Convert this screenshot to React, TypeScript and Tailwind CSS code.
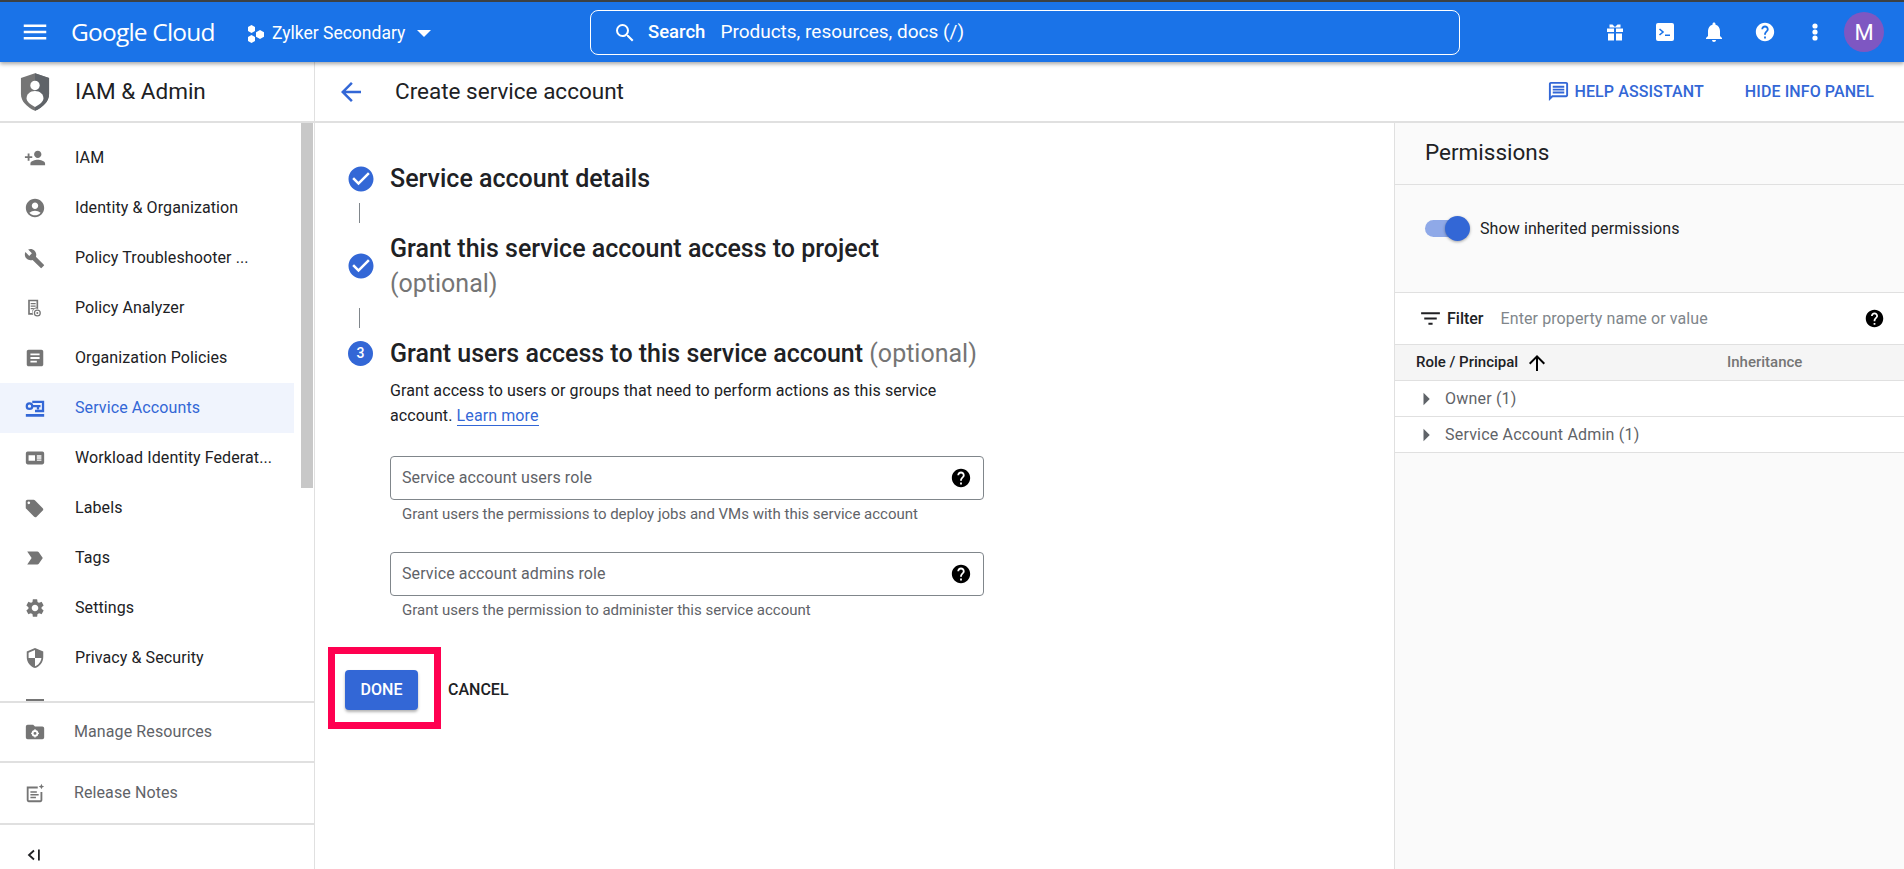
import React from "react";
import {
  MdAccountCircle,
  MdArrowBack,
  MdArrowRight,
  MdArrowUpward,
  MdArticle,
  MdBuild,
  MdCheckCircle,
  MdFilterList,
  MdHelp,
  MdLabelImportant,
  MdLocalOffer,
  MdMenu,
  MdNotifications,
  MdOutlineMessage,
  MdPersonAdd,
  MdSearch,
  MdSecurity,
  MdSettings,
} from "react-icons/md";

function PolicyAnalyzerIcon() {
  return (
    <svg viewBox="0 0 24 24" className="w-[20px] h-[20px] fill-[#757575]">
      <path d="M5 2h12v11.2a4.6 4.6 0 0 0-5.8 6.8H5zm2 2v14h2.600a7 7 0 0 1 5.400-6.800V4zm1 2h6v1.500H8zm0 3h6v1.500H8zm0 3h4v1.500H8z" fillRule="evenodd" />
      <circle cx="16" cy="18" r="3.500" fill="none" stroke="#757575" strokeWidth="1.500" />
      <circle cx="16" cy="18" r="1.200" />
    </svg>
  );
}

function ServiceAccountIcon() {
  return (
    <svg viewBox="0 0 24 24" className="w-[22px] h-[22px] fill-[#3367d6]">
      <path d="M2 18.500h20v3H2zM9 4h13v12.500H12v-2.500h7.500V6.500H9z" />
      <circle cx="6" cy="10" r="3" fill="none" stroke="#3367d6" strokeWidth="2.400" />
      <path d="M9 8.800h9v2.400h-1.500v2.300h-2.500v-2.300H9z" />
    </svg>
  );
}

function WorkloadIcon() {
  return (
    <svg viewBox="0 0 24 24" className="w-[22px] h-[22px] fill-[#757575]">
      <path fillRule="evenodd" d="M4 5h16a2 2 0 0 1 2 2v10a2 2 0 0 1-2 2H4a2 2 0 0 1-2-2V7a2 2 0 0 1 2-2zm1 4v6h7V9zm9 0v1.500h5V9zm0 2.300v1.500h5v-1.500zm0 2.200V15h5v-1.500z" />
    </svg>
  );
}

function ManageResourcesIcon() {
  return (
    <svg viewBox="0 0 24 24" className="w-[22px] h-[22px]">
      <path fill="#757575" d="M4 4h6l2 2h8a2 2 0 0 1 2 2v10a2 2 0 0 1-2 2H4a2 2 0 0 1-2-2V6a2 2 0 0 1 2-2z" />
      <circle cx="12" cy="13.500" r="2.600" fill="none" stroke="#fff" strokeWidth="2" />
      <path stroke="#fff" strokeWidth="1.500" d="M12 9v1.500M12 16.500V18M7.800 13.500h1.500M14.800 13.500h1.500" />
    </svg>
  );
}

function ReleaseNotesIcon() {
  return (
    <svg viewBox="0 0 24 24" className="w-[22px] h-[22px] fill-[#757575]">
      <path fillRule="evenodd" d="M3 5h12v2H5v13h13v-9h2v9a2 2 0 0 1-2 2H5a2 2 0 0 1-2-2z" />
      <path d="M7 10h7v1.600H7zm0 3h9v1.600H7zm0 3h6v1.600H7z" />
      <path d="M19 2l.900 2.100L22 5l-2.100.900L19 8l-.900-2.100L16 5l2.100-.900z" />
    </svg>
  );
}

function ShieldLogo() {
  return (
    <svg viewBox="0 0 32 40" className="w-[30px] h-[38px]">
      <path fill="#757575" d="M16 0l15 5v17c0 8-6.500 14-15 18C7.500 36 1 30 1 22V5z" />
      <path fill="#5f6368" d="M16 0l15 5v17c0 8-6.500 14-15 18z" />
      <circle cx="16" cy="13" r="5" fill="#fff" />
      <path fill="#fff" d="M16 19c5.500 0 9 3.500 9 8 0 3-4 6.500-9 9-5-2.500-9-6-9-9 0-4.500 3.500-8 9-8z" />
    </svg>
  );
}

function ProjectIcon() {
  return (
    <svg viewBox="0 0 18 18" className="w-[18px] h-[18px] fill-white">
      <path d="M4.500 0l3.500 2v4l-3.500 2L1 6V2z" />
      <path d="M4.500 10l3.500 2v4l-3.500 2L1 16v-4z" />
      <path d="M13 5l4 2.300v4.400L13 14l-4-2.300V7.300z" />
    </svg>
  );
}

function GiftIcon() {
  return (
    <svg viewBox="0 0 18 18" className="w-[18px] h-[19px] fill-white">
      <path d="M1 5h7v3.500H1zm9 0h7v3.500h-7zM2 10h6v7H2zm8 0h6v7h-6z" />
      <path d="M3.500 1h3L9 3.500 11.500 1h3v3h-11z" />
    </svg>
  );
}

function TerminalIcon() {
  return (
    <svg viewBox="0 0 18 18" className="w-[18px] h-[18px]">
      <rect width="18" height="18" rx="2" fill="#fff" />
      <path d="M3.500 6l3.500 3-3.500 3" fill="none" stroke="#1a73e8" strokeWidth="1.600" />
      <path d="M9 11.500h5v1.500H9z" fill="#1a73e8" />
    </svg>
  );
}

function DotsIcon() {
  return (
    <svg viewBox="0 0 6 18" className="w-[6px] h-[18px] fill-white">
      <circle cx="3" cy="3" r="2.600" />
      <circle cx="3" cy="9" r="2.600" />
      <circle cx="3" cy="15" r="2.600" />
    </svg>
  );
}

function CollapseIcon() {
  return (
    <svg viewBox="0 0 14 14" className="w-[14px] h-[14px]">
      <path d="M7 2.500L2 7l5 4.500" fill="none" stroke="#202124" strokeWidth="1.800" />
      <path d="M11 1.500h1.800v11H11z" fill="#202124" />
    </svg>
  );
}

const navItems = [
  { label: "IAM", icon: <MdPersonAdd size={22} color="#757575" /> },
  { label: "Identity & Organization", icon: <MdAccountCircle size={22} color="#757575" /> },
  { label: "Policy Troubleshooter ...", icon: <MdBuild size={21} color="#757575" /> },
  { label: "Policy Analyzer", icon: <PolicyAnalyzerIcon /> },
  { label: "Organization Policies", icon: <MdArticle size={22} color="#757575" /> },
  { label: "Service Accounts", icon: <ServiceAccountIcon />, active: true },
  { label: "Workload Identity Federat...", icon: <WorkloadIcon /> },
  { label: "Labels", icon: <MdLocalOffer size={21} color="#757575" /> },
  { label: "Tags", icon: <MdLabelImportant size={22} color="#757575" /> },
  { label: "Settings", icon: <MdSettings size={22} color="#757575" /> },
  { label: "Privacy & Security", icon: <MdSecurity size={22} color="#757575" /> },
];

function Sidebar() {
  return (
    <aside className="w-[315px] shrink-0 border-r border-[#e0e0e0] flex flex-col h-full">
      <div className="h-[580px] shrink-0 relative overflow-hidden pt-[10px] border-b-2 border-[#e0e0e0]">
        <div className="absolute right-[1px] top-0 w-[12px] h-[365px] bg-[#c8c8c8]" />
        {navItems.map((item) => (
          <div
            key={item.label}
            className={`h-[50px] w-[294px] flex items-center ${item.active ? "bg-[#f0f4fd]" : ""}`}
          >
            <div className="w-[75px] pl-[24px] flex items-center shrink-0">{item.icon}</div>
            <span className={`text-[16px] tracking-[0.1px] whitespace-nowrap ${item.active ? "text-[#3367d6]" : "text-[#202124]"}`}>
              {item.label}
            </span>
          </div>
        ))}
        <div className="h-[50px] flex items-center pl-[26px]">
          <div className="w-[18px] h-[18px] bg-[#757575]" />
        </div>
      </div>
      <div className="h-[60px] shrink-0 flex items-center border-b-2 border-[#e0e0e0]">
        <div className="w-[74px] pl-[24px] shrink-0">
          <ManageResourcesIcon />
        </div>
        <span className="text-[16px] tracking-[0.1px] text-[#5f6368]">Manage Resources</span>
      </div>
      <div className="h-[62px] shrink-0 flex items-center border-b-2 border-[#e0e0e0]">
        <div className="w-[74px] pl-[24px] shrink-0">
          <ReleaseNotesIcon />
        </div>
        <span className="text-[16px] tracking-[0.1px] text-[#5f6368]">Release Notes</span>
      </div>
      <div className="flex-1 flex items-end pb-[7px] pl-[27px]">
        <CollapseIcon />
      </div>
    </aside>
  );
}

function RoleField({ placeholder, hint }: { placeholder: string; hint: string }) {
  return (
    <div className="w-[594px]">
      <div className="h-[44px] border border-[#80868b] rounded-[4px] flex items-center justify-between pl-[11px] pr-[11px]">
        <span className="text-[16px] tracking-[0.1px] text-[#5f6368]">{placeholder}</span>
        <MdHelp size={22} color="#000" />
      </div>
      <p className="mt-[4px] pl-[12px] text-[15px] leading-[20px] text-[#5f6368]">{hint}</p>
    </div>
  );
}

function MainPanel() {
  return (
    <main className="flex-1 min-w-0 relative pt-[38px]">
      {/* Step 1 */}
      <div className="flex items-center h-[35px] pl-[33px]">
        <MdCheckCircle size={30} color="#3367d6" className="-ml-[2px] mr-[14px]" />
        <h2 className="text-[25px] font-medium text-[#202124]">Service account details</h2>
      </div>
      <div className="ml-[44px] w-px h-[20px] bg-[#80868b] mt-[7px] mb-[8px]" />

      {/* Step 2 */}
      <div className="flex items-center pl-[33px]">
        <MdCheckCircle size={30} color="#3367d6" className="-ml-[2px] mr-[14px]" />
        <h2 className="text-[25px] leading-[35px] font-medium text-[#202124] w-[520px]">
          Grant this service account access to project <span className="font-normal text-[#757575]">(optional)</span>
        </h2>
      </div>
      <div className="ml-[44px] w-px h-[20px] bg-[#80868b] mt-[7px] mb-[8px]" />

      {/* Step 3 */}
      <div className="flex items-center h-[35px] pl-[33px]">
        <div className="w-[25px] h-[25px] mr-[17px] rounded-full bg-[#3367d6] text-white text-[14px] font-medium flex items-center justify-center">
          3
        </div>
        <h2 className="text-[25px] font-medium text-[#202124] whitespace-nowrap">
          Grant users access to this service account <span className="font-normal text-[#757575]">(optional)</span>
        </h2>
      </div>
      <div className="ml-[75px] mt-[7px] w-[594px]">
        <p className="text-[16px] leading-[25px] tracking-[0.1px] text-[#202124]">
          Grant access to users or groups that need to perform actions as this service account.{" "}
          <span className="text-[#3367d6] border-b border-[#3367d6]">Learn more</span>
        </p>
        <div className="mt-[28px] flex flex-col gap-[28px]">
          <RoleField
            placeholder="Service account users role"
            hint="Grant users the permissions to deploy jobs and VMs with this service account"
          />
          <RoleField
            placeholder="Service account admins role"
            hint="Grant users the permission to administer this service account"
          />
        </div>
      </div>

      <div className="mt-[50px] ml-[30px] flex items-center">
        <button className="w-[73px] h-[40px] rounded-[4px] bg-[#3367d6] text-white text-[16px] font-medium shadow-[0_2px_3px_rgba(0,0,0,0.3)]">
          DONE
        </button>
        <span className="ml-[30px] text-[16px] font-medium text-[#202124]">CANCEL</span>
      </div>

      {/* red annotation round the button */}
      <div className="absolute left-[13px] top-[524px] w-[113px] h-[82px] border-[7px] border-[#ff0050]" />
    </main>
  );
}

function InfoPanel() {
  return (
    <section className="w-[510px] shrink-0 border-l border-[#e0e0e0] bg-[#fafafa] h-full">
      <div className="h-[62px] flex items-center pl-[30px] pb-[1px] border-b border-[#e0e0e0]">
        <h3 className="text-[22.5px] text-[#202124]">Permissions</h3>
      </div>
      <div className="h-[108px] flex items-start pt-[31px] pl-[30px] border-b border-[#e0e0e0]">
        <div className="relative w-[45px] h-[25px] shrink-0 mr-[10px]">
          <div className="absolute left-0 top-[4px] w-[40px] h-[17px] rounded-full bg-[#8fa9e8]" />
          <div className="absolute right-0 top-0 w-[25px] h-[25px] rounded-full bg-[#3367d6] shadow-[0_1px_3px_rgba(0,0,0,0.35)]" />
        </div>
        <span className="text-[16px] leading-[25px] tracking-[0.1px] text-[#202124]">Show inherited permissions</span>
      </div>
      <div className="h-[52px] bg-white flex items-center pl-[23px] pr-[19px] border-b border-[#e0e0e0]">
        <MdFilterList size={25} color="#202124" />
        <span className="ml-[4px] text-[16px] font-medium text-[#202124]">Filter</span>
        <span className="ml-[17px] text-[16px] tracking-[0.1px] text-[#80868b]">Enter property name or value</span>
        <MdHelp size={21} color="#000" className="ml-auto" />
      </div>
      <div className="h-[36px] bg-[#f5f5f5] flex items-center pl-[21px] border-b border-[#e0e0e0]">
        <span className="w-[102px] text-[15px] font-medium text-[#202124] whitespace-nowrap">Role / Principal</span>
        <MdArrowUpward size={24} color="#000" className="ml-[7px]" />
        <span className="ml-[178px] text-[15px] font-medium text-[#757575]">Inheritance</span>
      </div>
      {["Owner (1)", "Service Account Admin (1)"].map((row) => (
        <div key={row} className="h-[36px] bg-white flex items-center pl-[16px] border-b border-[#e0e0e0]">
          <MdArrowRight size={30} color="#5f6368" />
          <span className="ml-[4px] text-[16px] tracking-[0.2px] text-[#5f6368]">{row}</span>
        </div>
      ))}
    </section>
  );
}

export default function App() {
  return (
    <div className="w-[1904px] h-[869px] overflow-hidden flex flex-col bg-white font-['Roboto',sans-serif]">
      {/* Top bar */}
      <header className="relative z-10 h-[62px] shrink-0 bg-[#1a73e8] border-t-2 border-[#3c4043] flex items-center shadow-[0_2px_4px_rgba(0,0,0,0.35)]">
        <MdMenu size={30} color="#fff" className="ml-[20px]" />
        <span className="ml-[21px] w-[145px] text-[24.5px] tracking-[-0.8px] text-white whitespace-nowrap font-['Open_Sans',sans-serif]">
          Google Cloud
        </span>
        <div className="ml-[31px] mt-[3px] flex items-center">
          <ProjectIcon />
          <span className="ml-[7px] text-[17.5px] text-white whitespace-nowrap">Zylker Secondary</span>
          <div className="ml-[12px] w-0 h-0 border-x-[7px] border-x-transparent border-t-[7px] border-t-white" />
        </div>
        <div className="absolute left-[590px] top-[8px] w-[870px] h-[45px] rounded-[8px] border border-white flex items-center pl-[22px]">
          <MdSearch size={24} color="#fff" />
          <span className="ml-[11px] text-[18.5px] font-medium text-white">Search</span>
          <span className="ml-[15px] text-[19px] text-white">Products, resources, docs (/)</span>
        </div>
        <div className="ml-auto flex items-center mr-[20px]">
          <GiftIcon />
          <div className="ml-[32px]"><TerminalIcon /></div>
          <MdNotifications size={24} color="#fff" className="ml-[28px]" />
          <MdHelp size={22} color="#fff" className="ml-[28px]" />
          <div className="ml-[36px] mr-[26px]"><DotsIcon /></div>
          <div className="w-[40px] h-[40px] rounded-full bg-[#7e57c2] text-white text-[22px] flex items-center justify-center">
            M
          </div>
        </div>
      </header>

      {/* Sub header */}
      <div className="h-[61px] shrink-0 flex items-center border-b-2 border-[#e0e0e0]">
        <div className="w-[315px] h-full shrink-0 flex items-center pl-[20px] border-r border-[#e0e0e0]">
          <ShieldLogo />
          <span className="ml-[25px] text-[22.5px] text-[#202124]">IAM &amp; Admin</span>
        </div>
        <MdArrowBack size={30} color="#3367d6" className="ml-[21px]" />
        <span className="ml-[29px] text-[22.5px] text-[#202124]">Create service account</span>
        <div className="ml-auto flex items-center mr-[30px] text-[#3367d6] text-[16px] font-medium tracking-[0.1px]">
          <MdOutlineMessage size={23} color="#3367d6" />
          <span className="ml-[4px]">HELP ASSISTANT</span>
          <span className="ml-[41px]">HIDE INFO PANEL</span>
        </div>
      </div>

      <div className="flex-1 flex min-h-0">
        <Sidebar />
        <MainPanel />
        <InfoPanel />
      </div>
    </div>
  );
}
